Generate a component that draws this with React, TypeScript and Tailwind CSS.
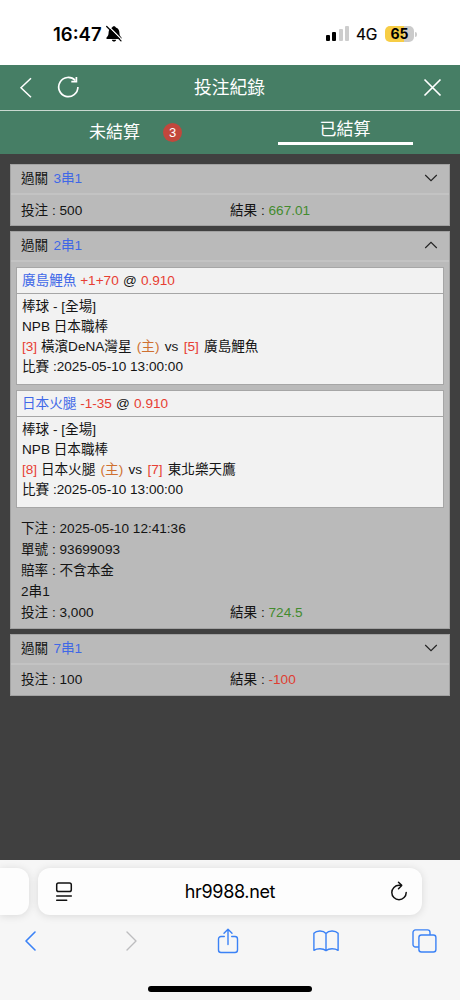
import type { ReactNode } from "react";

type Leg = {
  pick: string;
  line: string;
  odds: string;
  homeSeed: string;
  home: string;
  awaySeed: string;
  away: string;
};

const legs: Leg[] = [
  { pick: "廣島鯉魚", line: "+1+70", odds: "0.910", homeSeed: "[3]", home: "橫濱DeNA灣星", awaySeed: "[5]", away: "廣島鯉魚" },
  { pick: "日本火腿", line: "-1-35", odds: "0.910", homeSeed: "[8]", home: "日本火腿", awaySeed: "[7]", away: "東北樂天鷹" },
];

function StatusBar() {
  return (
    <div className="flex h-[65px] shrink-0 items-center bg-white pl-[53px] pr-[43px] pt-[3px] font-['Inter','Liberation_Sans',sans-serif] text-black">
      <span className="w-[49px] whitespace-nowrap text-[18.500px] font-semibold leading-none">16:47</span>
      <svg className="ml-[3px]" width="18" height="18" viewBox="0 0 18 18">
        <path d="M9 1.200c-1 0-1.700.6-1.800 1.300C4.700 3.300 3.600 5.300 3.600 7.600c0 2.600-.8 3.700-2 4.800-.6.600-.3 1.500.6 1.500h13.600c.9 0 1.200-.9.6-1.500-1.200-1.100-2-2.200-2-4.800 0-2.300-1.100-4.300-3.600-5.100C10.700 1.800 10 1.200 9 1.200ZM6.800 14.700c.2 1 1.100 1.900 2.200 1.900s2-.9 2.200-1.900Z" fill="#000" />
        <path d="M3 .8 17.300 15.100" stroke="#fff" strokeWidth="1.300" />
        <path d="M1.700 1.500 16 15.900" stroke="#000" strokeWidth="1.300" strokeLinecap="round" />
      </svg>
      <div className="flex flex-1 items-end justify-end gap-[2.400px] pb-[1px]">
        <i className="h-[6px] w-[4px] rounded-[1px] bg-black" />
        <i className="h-[8.500px] w-[4px] rounded-[1px] bg-black" />
        <i className="h-[11.500px] w-[4px] rounded-[1px] bg-[#cdcdcd]" />
        <i className="h-[14.500px] w-[4px] rounded-[1px] bg-[#cdcdcd]" />
      </div>
      <span className="ml-[7px] w-[21px] whitespace-nowrap pt-[1px] text-[15.500px] leading-none tracking-[-0.2px] [-webkit-text-stroke:0.2px_black]">4G</span>
      <span className="ml-[8px] flex h-[16px] w-[29px] items-center justify-center rounded-[5px] bg-[linear-gradient(to_right,#f7cd45_65%,#cbcbcb_65%)] text-[14px] font-bold leading-none">65</span>
      <i className="ml-[1px] h-[5px] w-[2px] rounded-r-full bg-[#cbcbcb]" />
    </div>
  );
}

function PageHeader() {
  return (
    <header className="h-[89px] shrink-0 bg-[#467e65] text-white">
      <div className="flex h-[46px] items-center border-b border-[#c9d8d0] pl-[19px] pr-[18px]">
        <svg width="14" height="22" viewBox="0 0 14 22" fill="none" stroke="#fff" strokeWidth="1.500">
          <path d="M12 1.200 2 10.700 12 20.200" />
        </svg>
        <svg className="ml-[24px]" width="23" height="23" viewBox="0 0 23 23" fill="none" stroke="#fff" strokeWidth="1.700">
          <path d="M20.900 11A9.600 9.600 0 1 1 18.300 4.500" />
          <path d="M19.400 1V5.700H14.300" />
        </svg>
        <h1 className="w-[299px] text-center text-[17.800px] leading-[26px]">投注紀錄</h1>
        <svg className="ml-auto" width="20" height="20" viewBox="0 0 20 20" fill="none" stroke="#fff" strokeWidth="1.700">
          <path d="m2.500 1.500 16 16M18.500 1.500l-16 16" />
        </svg>
      </div>
      <nav className="flex h-[43px] text-[17px]">
        <div className="flex w-[230px] items-center pl-[89px]">
          <span>未結算</span>
          <span className="ml-[23px] flex size-[19px] items-center justify-center rounded-full bg-[#c2473c] text-[13px] leading-none">3</span>
        </div>
        <div className="flex w-[230px] justify-center">
          <div className="flex h-[34px] w-[135px] items-center justify-center border-b-[3px] border-white pt-[6px] leading-[24px]">已結算</div>
        </div>
      </nav>
    </header>
  );
}

function BetCard({ combo, open = false, children }: { combo: string; open?: boolean; children: ReactNode }) {
  return (
    <section className="border border-[#a2a2a2] bg-[#bababa]">
      <div className="flex h-[30px] items-center justify-between border-b-2 border-[#c3c3c3] pb-[2px] pl-[10px] pr-[11px]">
        <span>
          過關 <span className="ml-[1.500px] text-[#3f68e6]">{combo}</span>
        </span>
        <svg width="14" height="8" viewBox="0 0 14 8" fill="none" stroke="#222" strokeWidth="1.100">
          <path d={open ? "M1.200 7 7 1.300 12.800 7" : "M1.200 1 7 6.700 12.800 1"} />
        </svg>
      </div>
      {children}
    </section>
  );
}

function Totals({ stake, result, lost = false }: { stake: string; result: string; lost?: boolean }) {
  return (
    <div className="flex">
      <span className="w-[209px]">投注 : {stake}</span>
      <span>
        結果 : <span className={lost ? "text-[#df3d31]" : "text-[#438b2e]"}>{result}</span>
      </span>
    </div>
  );
}

function LegBox({ leg }: { leg: Leg }) {
  return (
    <div className="h-[118px] border border-[#a6a6a6] bg-[#f2f2f2]">
      <div className="h-[26px] border-b border-[#a6a6a6] pl-[5px] leading-[25px]">
        <span className="text-[#4169e8]">{leg.pick}</span> <span className="text-[#e73e33]">{leg.line}</span>{" "}
        <span className="mx-[0.400px]">@</span> <span className="text-[#e73e33]">{leg.odds}</span>
      </div>
      <div className="pl-[5px] pt-[3px] leading-[20px]">
        <p>棒球 - [全場]</p>
        <p>NPB 日本職棒</p>
        <p>
          <span className="text-[#e73e33]">{leg.homeSeed}</span> {leg.home} <span className="mx-[1.500px] text-[#cf7030]">(主)</span> vs{" "}
          <span className="mx-[1.500px] text-[#e73e33]">{leg.awaySeed}</span> {leg.away}
        </p>
        <p>比賽 :2025-05-10 13:00:00</p>
      </div>
    </div>
  );
}

function BrowserBar() {
  return (
    <footer className="h-[140px] shrink-0 overflow-hidden bg-[#f6f6f6]">
      <div className="flex gap-[9px] pt-[8px]">
        <div className="h-[47px] w-[29px] rounded-r-[12px] bg-[#fdfdfd] shadow-[0_1px_9px_rgba(0,0,0,0.12)]" />
        <div className="flex h-[47px] w-[384px] items-center rounded-[12px] bg-[#fdfdfd] pl-[17px] pr-[13px] shadow-[0_1px_9px_rgba(0,0,0,0.12)]">
          <svg width="18" height="22" viewBox="0 0 18 22" fill="none" stroke="#111" strokeWidth="1.500" strokeLinecap="round">
            <rect x="1.700" y="2" width="14.600" height="8.600" rx="1.800" />
            <path d="M1.700 15h14.600M1.700 19.300h10" />
          </svg>
          <span className="flex-1 pr-[2px] text-center font-['Inter','Liberation_Sans',sans-serif] text-[18px] tracking-[-0.35px] text-black">hr9988.net</span>
          <svg width="20" height="22" viewBox="0 0 20 22" fill="none" stroke="#111" strokeWidth="1.500" strokeLinecap="round" strokeLinejoin="round">
            <path d="M17.200 11.500a7.200 7.200 0 1 1-7.200-7.200h2" />
            <path d="m9.500 1.300 3.200 3.100-3.200 3.400" />
          </svg>
        </div>
      </div>
      <div className="flex h-[52px] items-center pl-[24px] text-[#3b82f6]">
        <svg width="13" height="20" viewBox="0 0 13 20" fill="none" stroke="currentColor" strokeWidth="1.600" strokeLinecap="round" strokeLinejoin="round">
          <path d="m11 1-9 9 9 9" />
        </svg>
        <svg className="ml-[88px]" width="13" height="20" viewBox="0 0 13 20" fill="none" stroke="#bdbdbf" strokeWidth="1.400" strokeLinecap="round" strokeLinejoin="round">
          <path d="m2 1 9 9-9 9" />
        </svg>
        <svg className="ml-[79px]" width="22" height="26" viewBox="0 0 22 26" fill="none" stroke="currentColor" strokeWidth="1.400" strokeLinecap="round" strokeLinejoin="round">
          <path d="M7.300 8.500H4a2.500 2.500 0 0 0-2.500 2.500v11A2.500 2.500 0 0 0 4 24.500h14a2.500 2.500 0 0 0 2.500-2.500V11A2.500 2.500 0 0 0 18 8.500h-3.300M11 16.500V1.500M7 5.200l4-4 4 4" />
        </svg>
        <svg className="ml-[74px]" width="26" height="22" viewBox="0 0 26 22" fill="none" stroke="currentColor" strokeWidth="1.400" strokeLinecap="round" strokeLinejoin="round">
          <path d="M13 3.500C10-.1 3.500.5.900 3.300V20.300c3-2 9.100-2.300 12.100.3 3-2.600 9.100-2.300 12.100-.3V3.300C22.500.5 16-.1 13 3.500Zm0 0v17" />
        </svg>
        <svg className="ml-[73px]" width="25" height="24" viewBox="0 0 25 24" fill="none" stroke="currentColor" strokeWidth="1.400">
          <path d="M6.800 18H3.600A2.500 2.500 0 0 1 1 15.500V3.400A2.500 2.500 0 0 1 3.500.9h12A2.500 2.500 0 0 1 18 3.400V6" />
          <rect x="6.900" y="6" width="17" height="17" rx="2.500" />
        </svg>
      </div>
      <div className="mx-auto mt-[19px] h-[5.500px] w-[164px] rounded-full bg-black" />
    </footer>
  );
}

export default function App() {
  return (
    <div className="flex h-[1000px] w-[460px] flex-col overflow-hidden bg-[#404040] font-['Liberation_Sans','Noto_Sans_CJK_TC',sans-serif]">
      <StatusBar />
      <PageHeader />
      <main className="flex flex-1 flex-col gap-[5px] px-[10px] pt-[10px] text-[13.600px] leading-[21px] text-[#141414]">
        <BetCard combo="3串1">
          <div className="h-[30px] pl-[10px] pt-[5px]">
            <Totals stake="500" result="667.01" />
          </div>
        </BetCard>
        <BetCard combo="2串1" open>
          <div className="flex flex-col gap-[5px] px-[5px] pt-[5px]">
            {legs.map((leg) => (
              <LegBox key={leg.pick} leg={leg} />
            ))}
          </div>
          <div className="h-[120px] pl-[10px] pt-[10px]">
            <p>下注 : 2025-05-10 12:41:36</p>
            <p>單號 : 93699093</p>
            <p>賠率 : 不含本金</p>
            <p>2串1</p>
            <Totals stake="3,000" result="724.5" />
          </div>
        </BetCard>
        <BetCard combo="7串1">
          <div className="h-[30px] pl-[10px] pt-[4px]">
            <Totals stake="100" result="-100" lost />
          </div>
        </BetCard>
      </main>
      <BrowserBar />
    </div>
  );
}
